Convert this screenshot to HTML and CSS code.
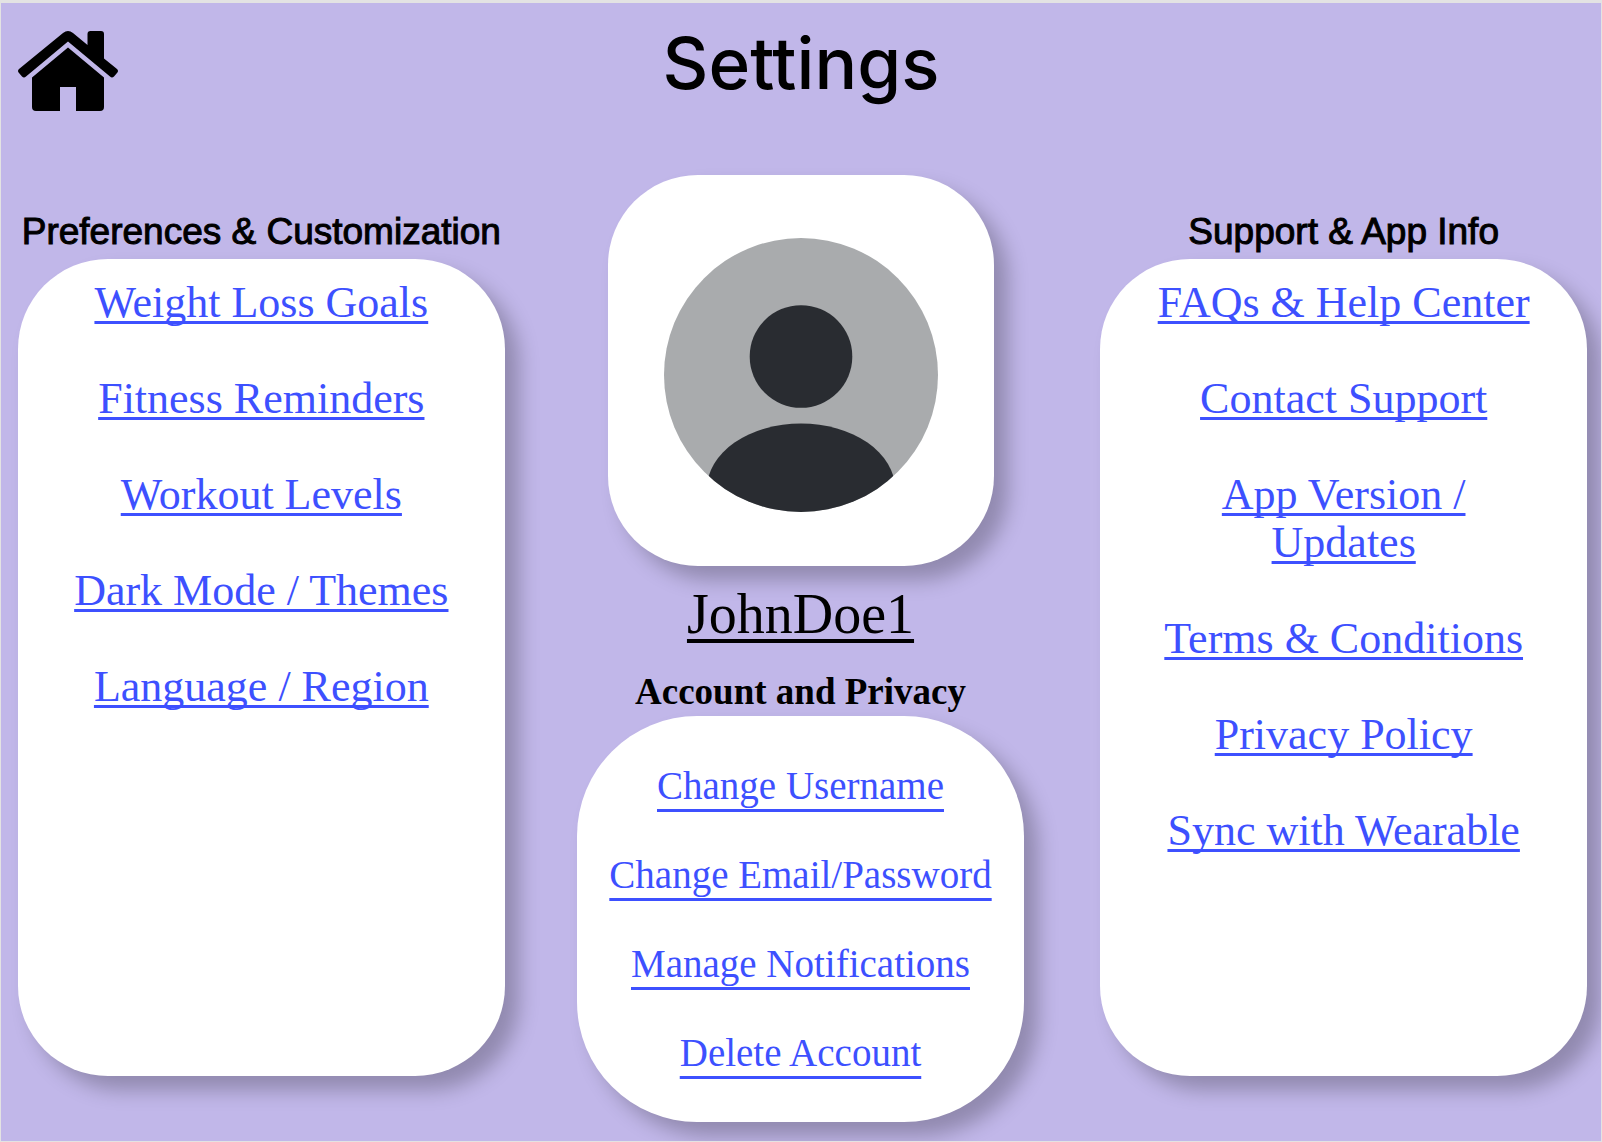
FILE: index.html
```html
<!DOCTYPE html>
<html lang="en">
<head>
<meta charset="utf-8">
<meta name="viewport" content="width=device-width, initial-scale=1">
<title>Settings</title>
<link rel="stylesheet" href="styles.css">
</head>
<body>
<div class="page">
  <header class="header">
    <a class="home" href="#" aria-label="Home">
      <svg class="home-icon" viewBox="0 0 100 80" aria-hidden="true">
        <path d="M1 38 45 2Q50-2 55 2L69.500 14V3Q69.500 0 72.500 0H83Q86 0 86 3V27.500L99 38Q101 40 99 42L96 45.500Q94 47.500 92 45.500L50 10.500 8 45.500Q6 47.500 4 45.500L1 42Q-1 40 1 38Z"/>
        <path d="M50 16.500 86 46.500V76Q86 80 82 80H58V56H42V80H18Q14 80 14 76V46.500Z"/>
      </svg>
    </a>
    <h1 class="title">Settings</h1>
  </header>
  <main class="columns">
    <section class="side">
      <h2 class="heading">Preferences &amp; Customization</h2>
      <ul class="card links">
        <li><a href="#">Weight Loss Goals</a></li>
        <li><a href="#">Fitness Reminders</a></li>
        <li><a href="#">Workout Levels</a></li>
        <li><a href="#">Dark Mode / Themes</a></li>
        <li><a href="#">Language / Region</a></li>
      </ul>
    </section>
    <section class="center">
      <div class="card profile">
        <svg class="avatar" viewBox="0 0 274 274" role="img" aria-label="Profile picture">
          <clipPath id="round"><circle cx="137" cy="137" r="137"/></clipPath>
          <g clip-path="url(#round)">
            <rect width="274" height="274" fill="#a9abad"/>
            <circle cx="137" cy="118.500" r="51.300" fill="#292c31"/>
            <ellipse cx="137" cy="250.500" rx="94" ry="65" fill="#292c31"/>
          </g>
        </svg>
      </div>
      <a class="username" href="#">JohnDoe1</a>
      <h2 class="heading heading-serif">Account and Privacy</h2>
      <ul class="card links account">
        <li><a href="#">Change Username</a></li>
        <li><a href="#">Change Email/Password</a></li>
        <li><a href="#">Manage Notifications</a></li>
        <li><a href="#">Delete Account</a></li>
      </ul>
    </section>
    <section class="side">
      <h2 class="heading">Support &amp; App Info</h2>
      <ul class="card links">
        <li><a href="#">FAQs &amp; Help Center</a></li>
        <li><a href="#">Contact Support</a></li>
        <li><a href="#">App Version / Updates</a></li>
        <li><a href="#">Terms &amp; Conditions</a></li>
        <li><a href="#">Privacy Policy</a></li>
        <li><a href="#">Sync with Wearable</a></li>
      </ul>
    </section>
  </main>
</div>
</body>
</html>
```
FILE: styles.css
```css
* {
  box-sizing: border-box;
}

body {
  margin: 0;
  font-family: "Liberation Serif", serif;
  color: #000;
}

.page {
  min-height: 100vh;
  border: 1px solid #e3e3e3;
  border-top-width: 3px;
  background: #c1b7e9;
  overflow: hidden;
}

.header {
  display: grid;
  grid-template-columns: 1fr auto 1fr;
  align-items: start;
  padding: 15px 17px 0;
  min-height: 172px;
}

.home {
  justify-self: start;
  margin-top: 13px;
  color: #000;
}

.home-icon {
  display: block;
  width: 100px;
  height: 80px;
  fill: currentColor;
}

.title {
  margin: 0;
  font: 500 71px/90px Inter, sans-serif;
}

.columns {
  display: flex;
  padding: 0 14px 18px 17px;
}

.side {
  flex: 487 1 0;
  display: flex;
  flex-direction: column;
  padding: 35px 0 46px;
}

.side .card {
  flex: 1;
}

.center {
  flex: 448 1 0;
  display: flex;
  flex-direction: column;
  align-items: center;
  margin: 0 76px 0 72px;
}

.heading {
  margin: 0 0 5px;
  font: 400 37px/44px "Liberation Sans", sans-serif;
  -webkit-text-stroke: 1px #000;
  text-align: center;
  white-space: nowrap;
}

.heading-serif {
  margin: 24px 0 2px;
  font: 700 37px/44px "Liberation Serif", serif;
  -webkit-text-stroke: 0;
}

.card {
  background: #fff;
  border-radius: 90px;
  box-shadow: 14px 14px 20px rgba(0, 0, 0, 0.25);
}

.profile {
  display: flex;
  justify-content: center;
  padding: 63px 56px 54px;
}

.avatar {
  display: block;
  width: 274px;
  height: 274px;
}

.username {
  margin-top: 16px;
  font-size: 56px;
  line-height: 64px;
  color: #000;
  text-decoration-thickness: 4px;
  text-underline-offset: 6px;
  text-decoration-skip-ink: none;
}

.links {
  display: flex;
  flex-direction: column;
  gap: 48px;
  margin: 0;
  padding: 20px 56px;
  list-style: none;
  text-align: center;
  font-size: 44px;
  line-height: 48px;
}

.links a {
  color: #3d50ff;
  text-decoration-thickness: 3px;
  text-underline-offset: 4px;
  text-decoration-skip-ink: none;
}

.account {
  align-self: stretch;
  gap: 44px;
  padding: 47px 24px;
  border-radius: 120px;
  font-size: 39px;
  line-height: 45px;
}

.account a {
  text-underline-offset: 10px;
}
```
